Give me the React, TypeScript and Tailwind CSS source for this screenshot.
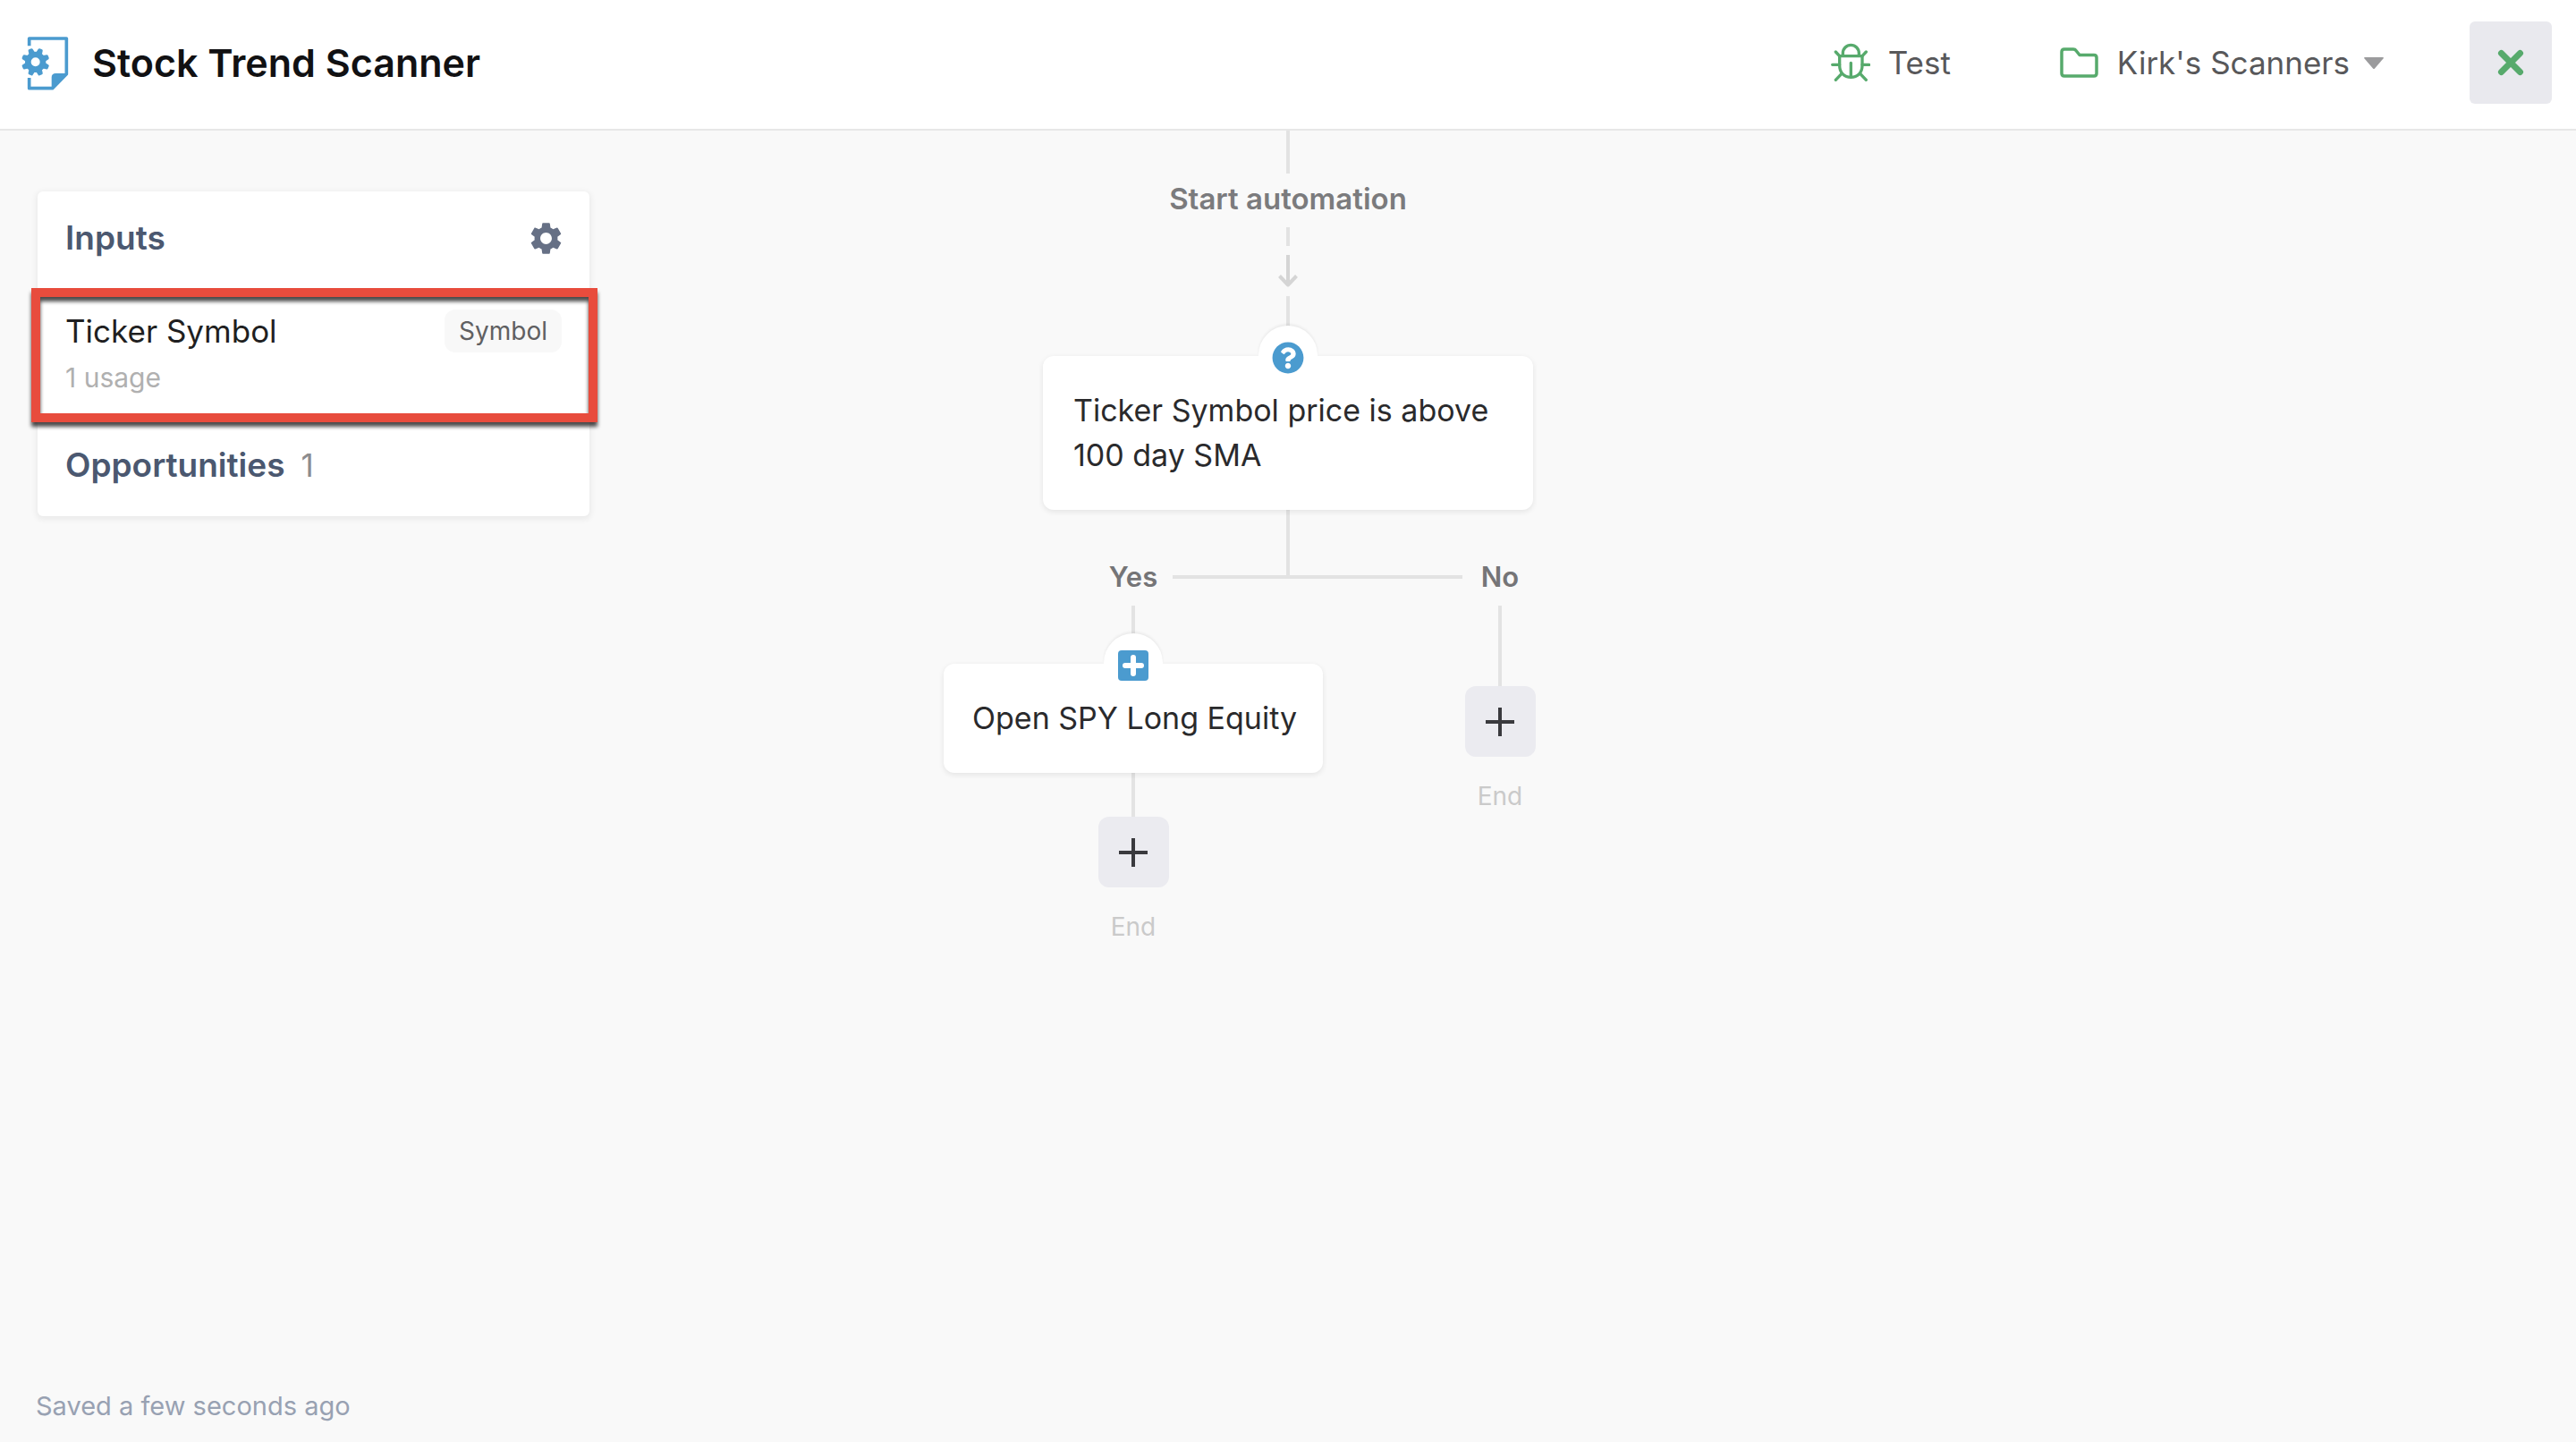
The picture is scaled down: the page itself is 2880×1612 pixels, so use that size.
import type { ReactNode } from "react";
import { FaQuestionCircle } from "react-icons/fa";
import { MdSettings } from "react-icons/md";

function ScannerIcon() {
  const teeth = [0, 45, 90, 135, 180, 225, 270, 315];
  return (
    <svg viewBox="40 30 159 183" className="h-[61px] w-[53px] text-[#4b9bcf]" aria-hidden="true">
      <path d="M66 64V39H191V158L144 206H66V171" fill="none" stroke="currentColor" strokeWidth="11" strokeLinejoin="round" />
      <path d="M141 208V170Q141 156 155 156H194Z" fill="currentColor" />
      <g fill="currentColor">
        {teeth.map((angle) => (
          <path key={angle} d="M76 90L79 74Q80 71 83 71H91Q94 71 95 74L98 90Z" transform={`rotate(${angle + 22.5} 87 118)`} />
        ))}
      </g>
      <circle cx="87" cy="118" r="25" fill="none" stroke="currentColor" strokeWidth="20" />
    </svg>
  );
}

function BugIcon() {
  return (
    <svg viewBox="21 24 132 132" className="size-11 text-[#57aa6c]" fill="none" stroke="currentColor" strokeWidth="10" strokeLinecap="round" aria-hidden="true">
      <path d="M61 66V58a27 27 0 0 1 54 0V66" />
      <path d="M50 68H126V100C126 124 110 139 88 139S50 124 50 100Z" strokeLinejoin="round" />
      <path d="M88 91V138M26 97H50M126 97H149M37 54L50 68M139 54L126 68M37 148L57 127M139 148L119 127" />
    </svg>
  );
}

function FolderIcon() {
  return (
    <svg viewBox="0 0 43 34" className="h-[34px] w-[43px] text-[#57aa6c]" fill="none" stroke="currentColor" strokeWidth="3.5" strokeLinejoin="round" aria-hidden="true">
      <path d="M5 2H15Q17 2 18 3.500L22 8.500H38Q41 8.500 41 11.500V29Q41 32 38 32H5Q2 32 2 29V5Q2 2 5 2Z" />
    </svg>
  );
}

function PlusBadge() {
  return (
    <svg viewBox="0 0 34 34" className="size-[34px]" aria-hidden="true">
      <rect width="34" height="34" rx="4" fill="#4b9bcf" />
      <path d="M17 8V26M8 17H26" stroke="#fff" strokeWidth="6" strokeLinecap="round" />
    </svg>
  );
}

function VLine({ className }: { className: string }) {
  return <div className={`w-1 bg-[#e3e3e3] ${className}`} />;
}

function NodeCard({ icon, className, children }: { icon: ReactNode; className: string; children: ReactNode }) {
  return (
    <div className={`relative rounded-xl bg-white py-9 text-[34px] leading-[50px] text-[#2a2a2c] shadow-[0_2px_6px_rgba(0,0,0,0.09)] ${className}`}>
      <div className="absolute -top-[34px] left-1/2 h-[34px] w-[66px] -translate-x-1/2 rounded-t-[33px] bg-white shadow-[0_-2px_3px_rgba(0,0,0,0.06)]" />
      <div className="absolute top-0 left-1/2 flex h-1 w-[66px] -translate-x-1/2 items-center justify-center bg-white">{icon}</div>
      {children}
    </div>
  );
}

function EndStep() {
  return (
    <>
      <button type="button" aria-label="Add step" className="flex size-[79px] items-center justify-center rounded-xl bg-[#ebebf0]">
        <svg viewBox="0 0 32 32" className="size-8" stroke="#3a3a3e" strokeWidth="4" aria-hidden="true">
          <path d="M16 0V32M0 16H32" />
        </svg>
      </button>
      <p className="mt-6 text-[28px] leading-10 text-[#cacaca]">End</p>
    </>
  );
}

export default function App() {
  return (
    <div className="flex min-h-screen flex-col bg-[#f9f9f9] font-['Inter','Liberation_Sans',sans-serif]">
      <header className="flex items-center border-b-2 border-[#e7e7e7] bg-white pt-6 pr-[27px] pb-7 pl-6">
        <ScannerIcon />
        <h1 className="ml-[26px] text-[43px] leading-[60px] font-semibold text-[#111113]">Stock Trend Scanner</h1>
        <nav className="ml-auto flex items-center text-[35px] leading-[50px] text-[#58585a]">
          <button type="button" className="flex items-center gap-5">
            <BugIcon />
            Test
          </button>
          <button type="button" aria-haspopup="menu" className="ml-[122px] flex items-center">
            <FolderIcon />
            <span className="ml-[21px]">Kirk's Scanners</span>
            <svg viewBox="0 0 22 13" className="ml-4 h-[13px] w-[22px]" aria-hidden="true">
              <path d="M1 0H21Q22.500 0 21.500 1.500L12 12.500Q11 13.500 10 12.500L.5 1.500Q-.5 0 1 0Z" fill="#9b9b9d" />
            </svg>
          </button>
          <button type="button" aria-label="Close" className="ml-24 flex size-[92px] items-center justify-center rounded-md bg-[#e9e9ee]">
            <svg viewBox="0 0 30 30" className="size-[30px]" stroke="#57aa6c" strokeWidth="7" strokeLinecap="round" aria-hidden="true">
              <path d="M4.500 4.500L25.500 25.500M25.500 4.500L4.500 25.500" />
            </svg>
          </button>
        </nav>
      </header>

      <main className="grid flex-1 grid-cols-[1fr_auto_1fr] items-start">
        <aside className="mt-[68px] ml-[42px] w-[617px] rounded-md bg-white shadow-[0_2px_6px_2px_rgba(0,0,0,0.06)]">
          <div className="flex h-[104px] items-center justify-between pr-[27px] pl-[31px]">
            <h2 className="text-[37px] leading-[50px] font-semibold text-[#4b5870]">Inputs</h2>
            <button type="button" aria-label="Input settings">
              <MdSettings className="size-[43px] text-[#667085]" />
            </button>
          </div>
          <div className="relative px-[31px] pt-7 pb-5">
            <div className="flex items-center justify-between">
              <span className="text-[35px] leading-[46px] text-[#1f1f21]">Ticker Symbol</span>
              <span className="rounded-xl bg-[#f8f8f8] px-4 text-[28px] leading-[48px] text-[#606062]">Symbol</span>
            </div>
            <p className="mt-2 text-[30px] leading-10 text-[#b0b0b0]">1 usage</p>
            <div className="pointer-events-none absolute top-1 -right-[9px] -bottom-[10px] -left-[7px] border-10 border-[#e84c3d] drop-shadow-[0_5px_2px_rgba(0,0,0,0.7)]" />
          </div>
          <div className="flex h-[115px] items-center gap-[18px] px-[31px]">
            <h2 className="text-[37px] leading-[50px] font-semibold text-[#4b5870]">Opportunities</h2>
            <span className="text-[35px] leading-[50px] text-[#8c8c8e]">1</span>
          </div>
        </aside>

        <section aria-label="Automation flow" className="col-start-2 flex flex-col items-center">
          <VLine className="h-12" />
          <p className="mb-1 text-[33px] leading-14 font-semibold text-[#7b7b7d]">Start automation</p>
          <VLine className="h-[21px]" />
          <svg viewBox="0 0 24 36" className="my-2.5 h-9 w-6" fill="none" stroke="#d5d5d5" strokeWidth="4" aria-hidden="true">
            <path d="M12 0V34M2.500 23.500L12 33.500L21.500 23.500" strokeLinecap="butt" strokeLinejoin="round" />
          </svg>
          <VLine className="h-[67px]" />
          <NodeCard icon={<FaQuestionCircle className="size-9 shrink-0 text-[#4b9bcf]" />} className="w-[548px] px-[34px]">
            Ticker Symbol price is above 100 day SMA
          </NodeCard>
          <VLine className="h-[75px]" />

          <div className="-mt-8 grid grid-cols-[168px_88px_168px_156px_84px_106px]">
            <p className="col-start-2 text-center text-[31px] leading-[64px] font-semibold text-[#757577]">Yes</p>
            <div className="col-span-2 h-1 self-center bg-[#e3e3e3]" />
            <p className="text-center text-[31px] leading-[64px] font-semibold text-[#757577]">No</p>

            <div className="col-span-3 col-start-1 flex flex-col items-center">
              <VLine className="h-[65px]" />
              <NodeCard icon={<PlusBadge />} className="w-full px-8 whitespace-nowrap">
                Open SPY Long Equity
              </NodeCard>
              <VLine className="h-[49px]" />
              <EndStep />
            </div>
            <div className="col-start-5 flex flex-col items-center">
              <VLine className="h-[90px]" />
              <EndStep />
            </div>
          </div>
        </section>
      </main>

      <footer className="px-10 pb-5 text-[29px] leading-10 text-[#98a1b2]">Saved a few seconds ago</footer>
    </div>
  );
}
